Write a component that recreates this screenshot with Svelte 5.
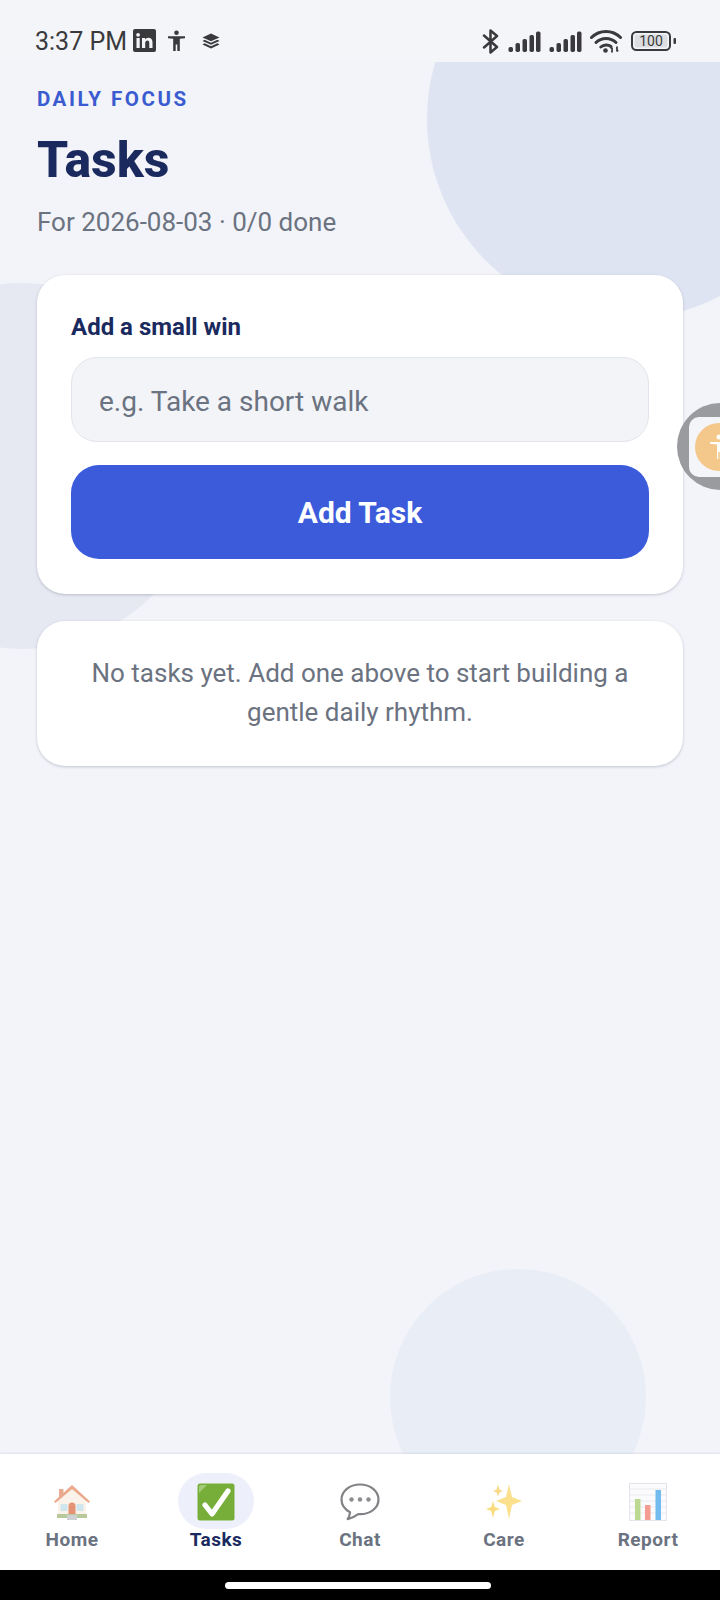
<script lang="ts">
  let draft = $state('');

  const tabs = [
    { id: 'home', label: 'Home' },
    { id: 'tasks', label: 'Tasks', active: true },
    { id: 'chat', label: 'Chat' },
    { id: 'care', label: 'Care' },
    { id: 'report', label: 'Report' },
  ];

  const bars = [
    [0.5, 16], [7.5, 12], [14.5, 8], [21.5, 4], [28, 0.5],
  ];
</script>

{#snippet signal()}
  <svg viewBox="0 0 33 21" width="33" height="21">
    {#each bars as [x, y]}
      <rect {x} {y} width="4.5" height={21 - y} rx="1.7" fill="#3a3a3c" />
    {/each}
  </svg>
{/snippet}

{#snippet tabIcon(id)}
  {#if id === 'home'}
    <svg viewBox="0 0 38 38" width="38" height="38">
      <rect x="6" y="6" width="4.5" height="9" fill="#e9a98f" />
      <path d="M19 3 36 18H33V32H5V18H2Z" fill="#fbf3ea" />
      <path d="M19 2 37 18.5 35.5 20 19 6 2.5 20 1 18.5Z" fill="#eba98c" />
      <rect x="7.5" y="21" width="7" height="7" fill="#cfe6ef" />
      <rect x="23.5" y="21" width="7" height="7" fill="#cfe6ef" />
      <path d="M15.5 32V23a3.5 3.5 0 0 1 7 0V32Z" fill="#e39273" />
      <rect x="4" y="31" width="30" height="4" fill="#b7c99a" />
      <rect x="14" y="32" width="10" height="5" fill="#cfd0d2" />
    </svg>
  {:else if id === 'tasks'}
    <svg viewBox="0 0 38 38" width="38" height="38">
      <rect x="0.5" y="0.5" width="37" height="37" rx="2.5" fill="#76ae39" />
      <path d="M2 10V4a2 2 0 0 1 2-2H10Z" fill="#a3cb75" />
      <path d="M8 22 15 31 31 8" fill="none" stroke="#fff" stroke-width="5.2" stroke-linecap="round" stroke-linejoin="round" />
    </svg>
  {:else if id === 'chat'}
    <svg viewBox="0 0 40 38" width="40" height="38">
      <path d="M20 1.5C9.5 1.5 1.5 8.2 1.5 16.5c0 5.4 3.4 10 8.6 12.7-.3 2.6-1.1 5-2.4 7 4-.9 7.8-3 10.6-5 .6 0 1.100 0 1.700 0 10.500 0 18.500-6.300 18.500-14.700S30.500 1.500 20 1.500Z" fill="#fff" stroke="#808285" stroke-width="2.200" stroke-linejoin="round" />
      <circle cx="11.500" cy="16.500" r="2.200" fill="#8b8d90" />
      <circle cx="20" cy="16.500" r="2.200" fill="#8b8d90" />
      <circle cx="28.500" cy="16.500" r="2.200" fill="#8b8d90" />
    </svg>
  {:else if id === 'care'}
    <svg viewBox="0 0 38 38" width="38" height="38">
      <path d="M24 1 27 14 37 18 27 22 24 36 21 22 11 18 21 14Z" fill="#fbe08d" />
      <path d="M13 1.500 14.500 6.500 18 8 14.500 9.500 13 13.500 11.500 9.500 8 8 11.500 6.500Z" fill="#f9d98a" />
      <path d="M8 18 9.800 24 15 26 9.800 28 8 35 6.200 28 1 26 6.200 24Z" fill="#fbdc80" />
    </svg>
  {:else}
    <svg viewBox="0 0 38 38" width="38" height="38">
      <rect x="0.500" y="0.500" width="37" height="37" fill="#fbfbfd" stroke="#e4e5ea" />
      <path d="M1 6H37M1 12H37M1 18H37M1 24H37M1 30H37" stroke="#e9eaee" stroke-width="1" />
      <rect x="6" y="16" width="5.500" height="21" fill="#bcd992" />
      <rect x="16" y="22" width="5.500" height="15" fill="#f39c8f" />
      <rect x="26.500" y="7" width="5.500" height="30" fill="#72bbee" />
    </svg>
  {/if}
{/snippet}

<div class="phone">
  <header class="status">
    <div class="status-left">
      <span class="clock">3:37 PM</span>
      <svg class="linkedin" viewBox="0 0 23 23" width="23" height="23">
        <rect width="23" height="23" rx="2" fill="#3a3a3c" />
        <rect x="3.500" y="9" width="3.200" height="10" fill="#f3f5f9" />
        <circle cx="5.100" cy="5.800" r="1.900" fill="#f3f5f9" />
        <path d="M9 9h3v1.500c.7-1.100 1.900-1.800 3.300-1.800 2.800 0 4.200 1.700 4.200 4.700V19h-3.200v-5.100c0-1.500-.6-2.400-1.800-2.400-1.300 0-2.300.9-2.300 2.500V19H9Z" fill="#f3f5f9" />
      </svg>
      <svg class="person" viewBox="0 0 19 22" width="19" height="22">
        <circle cx="9.500" cy="2.700" r="2.300" fill="#3a3a3c" />
        <path d="M1 6.300 18 6.300 18 8.300 12.800 8.700V21H10.300V14.500H8.700V21H6.200V8.700L1 8.300Z" fill="#3a3a3c" />
      </svg>
      <svg class="layers" viewBox="0 0 18 16" width="18" height="16">
        <path d="M9 0.500 17.500 4.400 9 8.300 0.500 4.400Z" fill="#3a3a3c" />
        <path d="M2.500 6.700 9 9.700 15.500 6.700 17.500 7.900 9 11.800 0.500 7.900Z" fill="#3a3a3c" />
        <path d="M2.500 10.200 9 13.200 15.500 10.200 17.500 11.400 9 15.400 0.500 11.400Z" fill="#3a3a3c" />
      </svg>
    </div>
    <div class="status-right">
      <svg viewBox="0 0 18 25" width="18" height="25">
        <path d="M2 6.500 15 18 8.500 23.500V1.500L15 7 2 18.500" fill="none" stroke="#3a3a3c" stroke-width="2.500" stroke-linejoin="round" stroke-linecap="round" />
      </svg>
      {@render signal()}
      {@render signal()}
      <svg viewBox="0 0 32 24" width="32" height="24">
        <path d="M1.500 8.500C9.500 .5 22.500 .5 30.500 8.500" fill="none" stroke="#3a3a3c" stroke-width="3" stroke-linecap="round" />
        <path d="M6 13.500C11.500 8 20.500 8 26 13.500" fill="none" stroke="#3a3a3c" stroke-width="3" stroke-linecap="round" />
        <path d="M10.800 18C13.800 15.300 18.200 15.300 21 17.500" fill="none" stroke="#3a3a3c" stroke-width="3" stroke-linecap="round" />
        <circle cx="15.500" cy="21.500" r="2.300" fill="#3a3a3c" />
        <path d="M22 18.500v5M21 20l1-1.500M27 17.500v5M28 21l-1 1.500" fill="none" stroke="#3a3a3c" stroke-width="1.800" />
      </svg>
      <svg class="battery" viewBox="0 0 46 20" width="46" height="20">
        <rect x="1" y="1" width="38" height="18" rx="4.500" fill="none" stroke="#3a3a3c" stroke-width="2" />
        <rect x="3.500" y="3.500" width="33" height="13" rx="2.500" fill="#dcdde0" />
        <text x="20" y="15.200" text-anchor="middle" class="battery-text">100</text>
        <rect x="42.500" y="7" width="2.500" height="6" rx="1" fill="#3a3a3c" />
      </svg>
    </div>
  </header>

  <main>
    <div class="blob blob-top"></div>
    <div class="blob blob-left"></div>
    <div class="blob blob-bottom"></div>

    <div class="content">
      <p class="eyebrow">DAILY FOCUS</p>
      <h1>Tasks</h1>
      <p class="sub">For 2026-08-03 · 0/0 done</p>

      <section class="card add">
        <label for="task">Add a small win</label>
        <input id="task" placeholder="e.g. Take a short walk" bind:value={draft} />
        <button type="button">Add Task</button>
      </section>

      <section class="card empty">
        No tasks yet. Add one above to start building a gentle daily rhythm.
      </section>
    </div>
  </main>

  <nav aria-label="Main">
    {#each tabs as tab}
      <div class="tab" class:active={tab.active}>
        <span class="icon">{@render tabIcon(tab.id)}</span>
        <span class="tab-label">{tab.label}</span>
      </div>
    {/each}
  </nav>

  <div class="gesture"><span></span></div>

  <!-- floating accessibility shortcut -->
  <div class="float">
    <div class="float-inner">
      <div class="float-dot">
        <svg viewBox="0 0 24 30" width="24" height="30">
          <circle cx="12" cy="5" r="2.500" fill="#fff" />
          <path d="M3 10H21V11.800L14 12.500V27H12.800V20H11.200V27H10V12.500L3 11.800Z" fill="#fff" />
        </svg>
      </div>
    </div>
  </div>
</div>

<style>
  :global(body) {
    margin: 0;
    background: #f2f4f9;
  }

  .phone {
    position: relative;
    width: 720px;
    height: 1600px;
    display: flex;
    flex-direction: column;
    overflow: hidden;
    font-family: Roboto, "Liberation Sans", sans-serif;
    background: #f2f4f9;
  }

  /* Status bar */
  .status {
    height: 62px;
    flex: none;
    box-sizing: border-box;
    padding: 28px 43px 0 35px;
    display: flex;
    justify-content: space-between;
    align-items: flex-start;
    background: #f4f5f9;
  }
  .status-left {
    display: flex;
    align-items: flex-start;
  }
  .clock {
    font-size: 25px;
    line-height: 26px;
    color: #3a3a3c;
    margin-top: 1px;
  }
  .linkedin { margin-left: 6px; margin-top: 1px; }
  .person { margin-left: 11px; margin-top: 2px; }
  .layers { margin-left: 16px; margin-top: 5px; }
  .status-right {
    display: flex;
    align-items: center;
    gap: 8px;
    height: 26px;
  }
  .battery { margin-left: 1px; }
  .battery-text {
    font-size: 14px;
    fill: #3a3a3c;
    font-family: Roboto, sans-serif;
  }

  /* Main area */
  main {
    flex: 1;
    position: relative;
    overflow: hidden;
  }
  .blob {
    position: absolute;
    border-radius: 50%;
  }
  .blob-top {
    width: 400px;
    height: 400px;
    left: 427px;
    top: -143px;
    background: #dfe4f3;
  }
  .blob-left {
    width: 366px;
    height: 366px;
    left: -160px;
    top: 221px;
    background: #e6e9f2;
  }
  .blob-bottom {
    width: 256px;
    height: 256px;
    left: 390px;
    top: 1207px;
    background: #e9edf6;
  }
  .content {
    position: relative;
    padding: 25px 37px 0;
    display: flex;
    flex-direction: column;
  }
  .eyebrow {
    margin: 0;
    font-size: 20.500px;
    line-height: 24px;
    font-weight: 700;
    letter-spacing: 2.500px;
    color: #3b5bd0;
  }
  h1 {
    margin: 19px 0 0;
    font-size: 50px;
    line-height: 60px;
    font-weight: 800;
    color: #1b2a5e;
  }
  .sub {
    margin: 15px 0 0;
    font-size: 26px;
    line-height: 34px;
    color: #6b7280;
  }

  /* Cards */
  .card {
    background: #fff;
    border-radius: 28px;
    box-shadow: 0 1px 3px rgba(40, 50, 80, 0.24);
  }
  .add {
    margin-top: 36px;
    height: 319px;
    box-sizing: border-box;
    padding: 37px 34px 0;
    display: flex;
    flex-direction: column;
  }
  label {
    font-size: 24px;
    line-height: 30px;
    font-weight: 700;
    color: #1b2a5e;
  }
  input {
    margin-top: 15px;
    height: 85px;
    box-sizing: border-box;
    padding: 3px 27px 0;
    border: 1px solid #e2e5eb;
    border-radius: 26px;
    background: #f2f4f8;
    font: inherit;
    font-size: 28px;
    outline: none;
  }
  input::placeholder {
    color: #6b7280;
    opacity: 1;
  }
  button {
    margin-top: 23px;
    height: 94px;
    border: none;
    border-radius: 28px;
    background: #3b5bdb;
    color: #fff;
    font: inherit;
    font-size: 30px;
    font-weight: 700;
  }
  .empty {
    margin-top: 27px;
    height: 145px;
    box-sizing: border-box;
    padding: 33px 40px 0;
    text-align: center;
    font-size: 26px;
    line-height: 39px;
    color: #6b7280;
  }

  /* Bottom nav */
  nav {
    position: relative;
    flex: none;
    height: 116px;
    display: grid;
    grid-template-columns: repeat(5, 1fr);
    background: #fff;
    box-shadow: 0 -1px 2px rgba(40, 50, 80, 0.1);
  }
  .tab {
    display: flex;
    flex-direction: column;
    align-items: center;
    padding-top: 19px;
  }
  .icon {
    width: 76px;
    height: 56px;
    margin-bottom: 1px;
    border-radius: 28px;
    display: flex;
    align-items: flex-start;
    justify-content: center;
    padding-top: 10px;
    box-sizing: border-box;
  }
  .tab.active .icon { background: #edf0fb; }
  .tab-label {
    margin-top: -2px;
    font-size: 19px;
    line-height: 24px;
    font-weight: 700;
    letter-spacing: 0.500px;
    color: #6b7280;
  }
  .tab.active .tab-label { color: #1b2a5e; }

  /* Gesture bar */
  .gesture {
    flex: none;
    height: 30px;
    background: #000;
    display: flex;
    justify-content: center;
    padding: 12px 4px 0 0;
    box-sizing: border-box;
  }
  .gesture span {
    width: 266px;
    height: 7px;
    border-radius: 4px;
    background: #fff;
  }

  /* Floating button */
  .float {
    position: absolute;
    left: 677px;
    top: 403px;
    width: 87px;
    height: 87px;
    box-sizing: border-box;
    border-radius: 50%;
    background: #9a9b9e;
    padding: 14px 12px;
  }
  .float-inner {
    width: 75px;
    height: 60px;
    border-radius: 10px;
    background: #f4f5f8;
    display: flex;
    align-items: center;
    padding-left: 6px;
    box-sizing: border-box;
  }
  .float-dot {
    width: 48px;
    height: 48px;
    border-radius: 50%;
    background: #f4c78a;
    display: flex;
    align-items: center;
    justify-content: center;
  }
</style>
